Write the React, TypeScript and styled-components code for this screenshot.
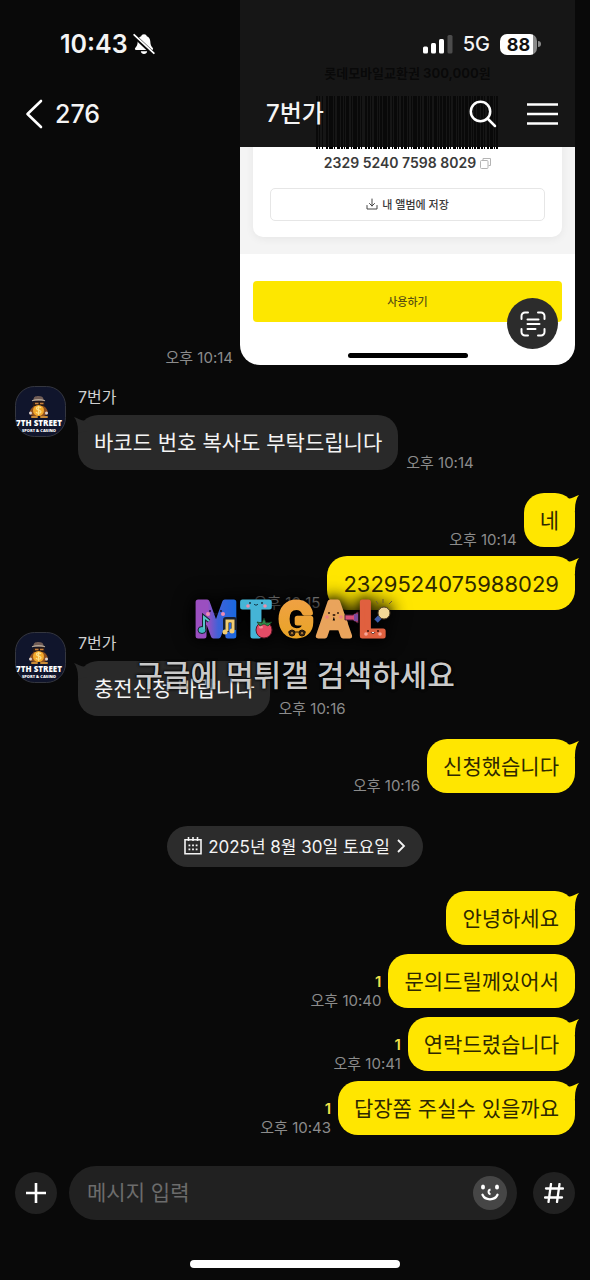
import React from 'react';
import styled, { createGlobalStyle } from 'styled-components';

const GlobalStyle = createGlobalStyle`
  * { box-sizing: border-box; }
  body {
    margin: 0;
    background: #090909;
    color: #f4f4f4;
    font-family: Inter, 'Noto Sans CJK KR', sans-serif;
  }
  button, input { font: inherit; color: inherit; }
  button { border: 0; padding: 0; background: none; cursor: pointer; }
  svg { display: block; flex: none; }
`;

const Screen = styled.div`
  position: relative;
  min-height: 100vh;
  display: flex;
  flex-direction: column;
  overflow: hidden;
`;

/* ---------- header ---------- */

const Header = styled.header`
  position: absolute;
  top: 0;
  left: 0;
  right: 0;
  z-index: 2;
  padding-bottom: 7px;
  background: rgba(9, 9, 9, 0.95);
`;

const StatusBar = styled.div`
  height: 88px;
  padding: 0 49px 0 60px;
  display: flex;
  align-items: center;
  justify-content: space-between;
`;

const StatusGroup = styled.div<{ $gap: number }>`
  display: flex;
  align-items: center;
  gap: ${(p) => p.$gap}px;
`;

const Clock = styled.time`
  font-size: 25px;
  font-weight: 600;
  line-height: 28px;
`;

const Network = styled.span`
  font-size: 20px;
  font-weight: 500;
  line-height: 24px;
`;

const Battery = styled.div`
  display: flex;
  align-items: center;
  gap: 1px;
`;

const BatteryBody = styled.span`
  width: 37px;
  height: 21px;
  border-radius: 7px;
  background: linear-gradient(to right, #fff 88%, #8a8a8a 88%);
  color: #111;
  font-size: 18px;
  font-weight: 700;
  line-height: 21px;
  text-align: center;
`;

const BatteryTip = styled.span`
  width: 3px;
  height: 6px;
  border-radius: 0 3px 3px 0;
  background: #8a8a8a;
`;

const NavBar = styled.nav`
  height: 52px;
  padding: 0 32px 0 25px;
  display: grid;
  grid-template-columns: 1fr auto 1fr;
  align-items: center;
`;

const BackButton = styled.button`
  display: flex;
  align-items: center;
  gap: 12px;
  font-size: 25px;
  font-weight: 500;
  line-height: 30px;
`;

const Title = styled.h1`
  margin: 0 0 0 7px;
  font-size: 24px;
  font-weight: 500;
  line-height: 30px;
`;

const NavActions = styled.div`
  display: flex;
  align-items: center;
  justify-content: flex-end;
  gap: 30px;
`;

/* ---------- coupon photo ---------- */

const Photo = styled.article`
  position: relative;
  width: 335px;
  padding-bottom: 7px;
  border-radius: 0 0 20px 20px;
  background: #fff;
  color: #3a3a3a;
  overflow: hidden;
`;

const CouponArea = styled.div`
  padding: 0 13px 17px;
  background: #f4f4f4;
`;

const CouponCard = styled.div`
  padding: 63px 17px 16px;
  border-radius: 0 0 10px 10px;
  background: #fff;
  box-shadow: 0 2px 8px rgba(0, 0, 0, 0.06);
  display: flex;
  flex-direction: column;
  align-items: center;
`;

const CouponTitle = styled.h2`
  margin: 0 0 13px;
  color: #000;
  font-size: 13px;
  font-weight: 700;
  line-height: 20px;
`;

const CouponNumber = styled.div`
  margin: 4px 0 15px;
  display: flex;
  align-items: center;
  gap: 4px;
  font-size: 14px;
  font-weight: 600;
  line-height: 20px;
`;

const SaveButton = styled.button`
  width: 100%;
  height: 33px;
  padding-bottom: 2px;
  border: 1px solid #e6e6e6;
  border-radius: 5px;
  display: flex;
  align-items: center;
  justify-content: center;
  gap: 4px;
  font-size: 11px;
  font-weight: 500;
`;

const UseButton = styled.button`
  display: block;
  width: calc(100% - 26px);
  height: 41px;
  margin: 27px 13px 31px;
  padding-bottom: 2px;
  border-radius: 4px;
  background: #fde700;
  color: #5a5010;
  font-size: 11px;
  font-weight: 500;
`;

const PhotoHandle = styled.div`
  width: 120px;
  height: 5px;
  margin: 0 auto;
  border-radius: 3px;
  background: #000;
`;

const ScanButton = styled.button`
  position: absolute;
  right: 17px;
  bottom: 16px;
  width: 51px;
  height: 51px;
  border-radius: 50%;
  background: #2c2c2c;
  display: grid;
  place-items: center;
`;

/* ---------- messages ---------- */

const Chat = styled.main`
  flex: 1;
  padding: 0 15px 31px;
  display: flex;
  flex-direction: column;
`;

const Row = styled.div<{ $mine?: boolean; $gap?: number }>`
  display: flex;
  justify-content: ${(p) => (p.$mine ? 'flex-end' : 'flex-start')};
  align-items: ${(p) => (p.$mine ? 'flex-end' : 'flex-start')};
  gap: ${(p) => (p.$mine ? 7 : 12)}px;
  margin-top: ${(p) => p.$gap ?? 0}px;
`;

const Sender = styled.div`
  margin-bottom: 7px;
  color: #cfcfcf;
  font-size: 16px;
  line-height: 22px;
`;

const BubbleLine = styled.div`
  display: flex;
  align-items: flex-end;
  gap: 8px;
`;

const Bubble = styled.div<{ $mine?: boolean; $digits?: boolean }>`
  position: relative;
  padding: ${(p) => (p.$mine ? '13px 16px 11px' : '13px 16px 12px')};
  border-radius: 20px;
  background: ${(p) => (p.$mine ? '#ffe600' : '#292929')};
  color: ${(p) => (p.$mine ? '#2e2800' : '#f4f4f4')};
  font-size: ${(p) => (p.$digits ? 22 : 21)}px;
  line-height: 30px;
`;

const Tail = styled.svg<{ $mine?: boolean }>`
  position: absolute;
  top: 2px;
  ${(p) => (p.$mine ? 'right: -4px;' : 'left: -4px;')}
  fill: ${(p) => (p.$mine ? '#ffe600' : '#292929')};
`;

const Meta = styled.div`
  display: flex;
  flex-direction: column;
  align-items: flex-end;
`;

const Unread = styled.span`
  color: #f0e04a;
  font-size: 15px;
  font-weight: 600;
  line-height: 24px;
`;

const Time = styled.time`
  color: #8c8c8c;
  font-size: 15px;
  line-height: 14px;
  white-space: nowrap;
`;

const DateChip = styled.button`
  align-self: center;
  height: 41px;
  margin: 33px 0 24px;
  padding: 0 17px 2px;
  border-radius: 21px;
  background: #2c2c2c;
  display: flex;
  align-items: center;
  gap: 6px;
  font-size: 17px;
`;

/* ---------- composer ---------- */

const Footer = styled.footer`
  padding: 0 15px 12px;
`;

const Composer = styled.form`
  display: flex;
  align-items: center;
`;

const RoundButton = styled.button<{ $size: number; $tone: string }>`
  flex: none;
  width: ${(p) => p.$size}px;
  height: ${(p) => p.$size}px;
  border-radius: 50%;
  background: ${(p) => p.$tone};
  display: grid;
  place-items: center;
`;

const Field = styled.div`
  flex: 1;
  min-width: 0;
  height: 54px;
  margin: 0 16px 0 12px;
  padding: 0 10px 0 18px;
  border-radius: 27px;
  background: #212121;
  display: flex;
  align-items: center;
`;

const TextInput = styled.input`
  flex: 1;
  min-width: 0;
  padding: 0;
  border: 0;
  outline: 0;
  background: none;
  font-size: 21px;
  line-height: 30px;
  &::placeholder { color: #6c6c6c; opacity: 1; }
`;

const HomeIndicator = styled.div`
  width: 210px;
  height: 8px;
  margin: 40px auto 0;
  border-radius: 4px;
  background: #fff;
`;

/* ---------- promotional overlay ---------- */

const Promo = styled.aside`
  position: absolute;
  top: 594px;
  left: 0;
  right: 0;
  display: flex;
  flex-direction: column;
  align-items: center;
  gap: 7px;
  pointer-events: none;
`;

const PromoLogo = styled.svg`
  overflow: visible;
  filter: drop-shadow(0 0 9px #000) drop-shadow(0 0 5px rgba(0, 0, 0, 0.7));
`;

const PromoText = styled.p`
  margin: 0;
  color: rgba(222, 222, 222, 0.92);
  font-size: 30px;
  font-weight: 500;
  line-height: 48px;
  text-shadow: 0 0 3px #000, 0 0 3px #000;
  white-space: nowrap;
`;

/* ---------- drawings ---------- */

const MutedBell = () => (
  <svg width="22" height="22" viewBox="0 0 22 22" fill="#fff" aria-hidden="true">
    <path d="M11 1.2c1.6 0 2.5.9 2.8 2 2.2.8 3.4 2.7 3.5 5.3.1 3.2.8 4.7 2.3 6.2.9.9.6 2.300-.8 2.300H3.200c-1.400 0-1.700-1.400-.8-2.300 1.500-1.500 2.200-3 2.300-6.200.1-2.600 1.300-4.500 3.500-5.300.3-1.100 1.200-2 2.800-2z" />
    <path d="M7.800 18.300h6.400c-.3 1.700-1.500 2.700-3.200 2.700s-2.900-1-3.200-2.700z" />
    <path d="M.5 2.200 20.500 21" stroke="#090909" strokeWidth="4" />
    <path d="M1.200 1.800 20.800 20.200" stroke="#fff" strokeWidth="1.800" strokeLinecap="round" />
  </svg>
);

const Signal = () => (
  <svg width="30" height="19" viewBox="0 0 30 19" fill="#fff" aria-hidden="true">
    <rect x="0" y="11.5" width="5" height="7" rx="1.5" />
    <rect x="8" y="8" width="5" height="10.5" rx="1.5" />
    <rect x="16" y="4" width="5" height="14.5" rx="1.5" />
    <rect x="24.5" y="0" width="5" height="18.5" rx="1.5" fill="#4c4c4c" />
  </svg>
);

const BARS = [
  2, 1, 1, 2, 1, 3, 2, 1, 4, 1, 1, 2, 3, 1, 2, 1, 1, 1, 3, 2, 1, 1, 4, 1, 2, 1, 1, 3, 2, 1, 2, 1, 1, 2,
  3, 1, 1, 1, 2, 1, 4, 1, 2, 2, 1, 1, 3, 1, 1, 2, 2, 1, 3, 1, 1, 2, 1, 1, 4, 1, 2, 1, 1, 2, 3, 1, 1, 1,
  2, 2, 3, 1, 1, 1, 2, 1, 3, 1, 2, 1, 1, 2, 3, 1, 1, 1, 2, 1, 2, 1, 3, 1, 2, 1, 1, 1, 2, 1, 3, 1, 2, 1,
  1, 2, 2, 1, 3, 1, 1, 1, 2, 1, 1,
];

const Barcode = () => {
  const bars: React.ReactNode[] = [];
  let x = 0;
  BARS.forEach((w, i) => {
    if (i % 2 === 0 && x + w <= 183) bars.push(<rect key={i} x={x} y="0" width={w} height="53" />);
    x += w;
  });
  return (
    <svg width="183" height="53" viewBox="0 0 183 53" role="img" aria-label="바코드">
      {bars}
    </svg>
  );
};

const Avatar = () => (
  <svg width="51" height="51" viewBox="0 0 51 51" role="img" aria-label="7번가">
    <rect x=".5" y=".5" width="50" height="50" rx="19" fill="#10152c" stroke="#34363f" />
    <path d="M18 16c-1 3 0 6 2 7h7c3-2 3-5 2-8z" fill="#2a1c18" />
    <path d="M18.5 13.500c.3-3 2-3.500 5-3.500s4.800.8 5 3.500l1 1.500H17.500z" fill="#6f5b55" />
    <path d="M17 14.800c4-1.500 9-1.500 13 0" stroke="#b5a898" strokeWidth="1.200" fill="none" />
    <path d="M20 17.500h3.500M25 17.500h3.500" stroke="#c9803c" strokeWidth="1.500" />
    <path d="M19 20c-4 3-5 6-4 9l4 1h10l4-2c0-4-2-7-5-8z" fill="#8f5120" />
    <circle cx="23.5" cy="24.5" r="5.5" fill="#f3a92c" />
    <path d="M26 22c-1-1.500-5-1.500-4.500.5.5 2 4.500 1.200 4.500 3.200 0 2-4 2-5 .3M23.600 20v9" stroke="#fbe08a" strokeWidth="1.200" fill="none" />
    <circle cx="15.500" cy="27" r="1.500" fill="#d8d0d0" />
    <circle cx="31.500" cy="27" r="1.500" fill="#d8d0d0" />
    <path d="M17 31h5M26 31h6" stroke="#c98a35" strokeWidth="2" strokeLinecap="round" />
    <text x="24" y="40" textAnchor="middle" fill="#fff" fontFamily="Open Sans, sans-serif" fontSize="8" fontWeight="800">7TH STREET</text>
    <text x="24" y="46" textAnchor="middle" fill="#fff" fontFamily="Open Sans, sans-serif" fontSize="4" fontWeight="800">SPORT &amp; CASINO</text>
  </svg>
);

const BubbleTail = ({ mine }: { mine?: boolean }) => (
  <Tail $mine={mine} width="18" height="18" viewBox="0 0 18 18" aria-hidden="true">
    {mine ? (
      <path d="M4 7 7.500 3.700C11 3.500 14.500 1 18 0c-2.500 3-4 8-4 14v2L4 14z" />
    ) : (
      <path d="M14 7 10.500 3.700C7 3.500 3.500 1 0 0c2.500 3 4 8 4 14v2l10-2z" />
    )}
  </Tail>
);

const Logo = () => (
  <PromoLogo width="196" height="50" viewBox="3 0 196 50" role="img" aria-label="MT.GAL">
    <defs>
      <linearGradient id="m" x1="0" x2="1" y1="0" y2="0">
        <stop offset=".3" stopColor="#9b4fc0" />
        <stop offset=".55" stopColor="#3f62d8" />
        <stop offset="1" stopColor="#1769e0" />
      </linearGradient>
      <linearGradient id="g" x1="0" x2="0" y1="0" y2="1">
        <stop offset="0" stopColor="#f0a04a" />
        <stop offset="1" stopColor="#e8a51f" />
      </linearGradient>
    </defs>
    <g fontFamily="Inter, sans-serif" fontSize="46" fontWeight="600" textAnchor="middle" strokeWidth="5" strokeLinejoin="round">
      <text x="22" y="42" fill="url(#m)" stroke="url(#m)">M</text>
      <text x="62" y="42" fill="#45b4d6" stroke="#45b4d6">T</text>
      <text x="102" y="42" fill="url(#g)" stroke="url(#g)">G</text>
      <text x="140" y="42" fill="#e9a45c" stroke="#e9a45c">A</text>
      <text x="178" y="42" fill="#e0603f" stroke="#e0603f">L</text>
    </g>
    {/* M: face and notes */}
    <g fill="#211733">
      <circle cx="16" cy="17" r="1" />
      <circle cx="27" cy="17" r="1" />
    </g>
    <circle cx="14" cy="20" r="2" fill="#f08bb4" />
    <circle cx="29" cy="20" r="2" fill="#f08bb4" />
    <path d="M20 19c1 1.500 2.500 1.500 3.500 0" stroke="#211733" fill="none" />
    <path d="M10 36V23l5 4" stroke="#182030" strokeWidth="4" fill="none" />
    <ellipse cx="8" cy="36" rx="4" ry="3.500" fill="#44b9c4" stroke="#182030" />
    <path d="M10 35V23l5 4" stroke="#56c5c8" strokeWidth="2" fill="none" />
    <path d="M32 38V26h8v10" stroke="#182030" strokeWidth="6" fill="none" strokeLinejoin="round" />
    <path d="M33 37V27h6v9" stroke="#f2cd72" strokeWidth="3" fill="none" />
    <circle cx="31" cy="38" r="2.500" fill="#f2cd72" />
    <circle cx="38" cy="37" r="2.500" fill="#f2cd72" />
    {/* T: face and tomato */}
    <g fill="#153544">
      <circle cx="56" cy="9" r="1" />
      <circle cx="68" cy="9" r="1" />
    </g>
    <path d="M60 10c1 1.500 3 1.500 4 0" stroke="#153544" fill="none" />
    <circle cx="54" cy="12" r="1.800" fill="#ee8eab" />
    <circle cx="71" cy="12" r="1.800" fill="#ee8eab" />
    <circle cx="70" cy="36" r="8" fill="#e54b66" stroke="#5a1726" />
    <ellipse cx="67" cy="33" rx="2" ry="1.500" fill="#f58b99" />
    <path d="M63 28l5 1 2-5 2 5 6-1-4 4-4-2-4 2z" fill="#2f8b48" stroke="#123b20" strokeWidth=".7" />
    {/* G: glasses */}
    <g fill="#3d2a16" stroke="#1b120b">
      <circle cx="98" cy="39" r="3" />
      <circle cx="108" cy="39" r="3" />
      <path d="M94 38h18" />
    </g>
    <circle cx="98" cy="39" r="1" fill="#c98a35" />
    <circle cx="108" cy="39" r="1" fill="#c98a35" />
    {/* A: face and megaphone */}
    <g fill="#3a2010">
      <circle cx="135" cy="19" r="1" />
      <circle cx="144" cy="19" r="1" />
      <ellipse cx="140" cy="21" rx="1.500" ry="1" />
    </g>
    <circle cx="133" cy="23" r="1.800" fill="#ef8080" />
    <circle cx="147" cy="23" r="1.800" fill="#ef8080" />
    <path d="M151 21h8l5-3v11l-5-3h-8z" fill="#d94d78" stroke="#4a1d3a" />
    <rect x="160" y="20" width="4" height="7" fill="#7c4a9c" />
    <path d="M152 28v5" stroke="#e9a45c" strokeWidth="3" strokeLinecap="round" />
    {/* L: face and bulb */}
    <g fill="#3a1510">
      <circle cx="174" cy="37" r="1" />
      <circle cx="184" cy="37" r="1" />
    </g>
    <path d="M177 38c1 2 3 2 4 0" stroke="#3a1510" fill="#fff" />
    <circle cx="172" cy="40" r="1.800" fill="#f7a79a" />
    <circle cx="186" cy="40" r="1.800" fill="#f7a79a" />
    <path d="M186 23l-4 4" stroke="#3d5aa8" strokeWidth="5" />
    <circle cx="190" cy="19" r="6" fill="#f2d797" stroke="#4b3b25" />
    <path d="M184 10l-2-3M189 9V5M195 10l3-3" stroke="#6b5a33" />
  </PromoLogo>
);

type Message = {
  text: string;
  time?: string;
  unread?: boolean;
  digits?: boolean;
  tail?: boolean;
  gap: number;
};

const Outgoing = ({ text, time, unread, digits, tail = true, gap }: Message) => (
  <Row $mine $gap={gap}>
    <Meta>
      {unread && <Unread>1</Unread>}
      {time && <Time>오후 {time}</Time>}
    </Meta>
    <Bubble $mine $digits={digits}>
      {text}
      {tail && <BubbleTail mine />}
    </Bubble>
  </Row>
);

const Incoming = ({ text, time, gap }: Message) => (
  <Row $gap={gap}>
    <Avatar />
    <div>
      <Sender>7번가</Sender>
      <BubbleLine>
        <Bubble>
          {text}
          <BubbleTail />
        </Bubble>
        <Time>오후 {time}</Time>
      </BubbleLine>
    </div>
  </Row>
);

export default function App() {
  return (
    <Screen>
      <GlobalStyle />
      <Header>
        <StatusBar>
          <StatusGroup $gap={5}>
            <Clock>10:43</Clock>
            <MutedBell />
          </StatusGroup>
          <StatusGroup $gap={10}>
            <Signal />
            <Network>5G</Network>
            <Battery>
              <BatteryBody>88</BatteryBody>
              <BatteryTip />
            </Battery>
          </StatusGroup>
        </StatusBar>
        <NavBar>
          <BackButton aria-label="뒤로, 읽지 않음 276">
            <svg width="18" height="30" viewBox="0 0 18 30" fill="none" stroke="#fff" strokeWidth="2.600" strokeLinecap="round" strokeLinejoin="round">
              <path d="M16 2 2.500 15 16 28" />
            </svg>
            276
          </BackButton>
          <Title>7번가</Title>
          <NavActions>
            <button aria-label="검색">
              <svg width="28" height="28" viewBox="0 0 28 28" fill="none" stroke="#fff" strokeWidth="2.500" strokeLinecap="round">
                <circle cx="11.500" cy="11.500" r="9.700" />
                <path d="m18.500 18.500 7.500 7.500" />
              </svg>
            </button>
            <button aria-label="메뉴">
              <svg width="31" height="24" viewBox="0 0 31 24" stroke="#fff" strokeWidth="2.500">
                <path d="M0 2.500h31M0 12h31M0 21.500h31" />
              </svg>
            </button>
          </NavActions>
        </NavBar>
      </Header>

      <Chat>
        <Row $mine>
          <Time>오후 10:14</Time>
          <Photo>
            <CouponArea>
              <CouponCard>
                <CouponTitle>롯데모바일교환권 300,000원</CouponTitle>
                <Barcode />
                <CouponNumber>
                  2329 5240 7598 8029
                  <svg width="11" height="11" viewBox="0 0 11 11" fill="none" stroke="#b4b4b4">
                    <path d="M3 2.500V.5h7.500v7H8.500" />
                    <rect x=".5" y="2.500" width="7.500" height="8" rx="1" />
                  </svg>
                </CouponNumber>
                <SaveButton>
                  <svg width="12" height="12" viewBox="0 0 12 12" fill="none" stroke="#444" strokeLinecap="round" strokeLinejoin="round">
                    <path d="M6 1v7M3.500 5.500 6 8l2.500-2.500M1 7.500V11h10V7.500" />
                  </svg>
                  내 앨범에 저장
                </SaveButton>
              </CouponCard>
            </CouponArea>
            <UseButton>사용하기</UseButton>
            <PhotoHandle />
            <ScanButton aria-label="텍스트 인식">
              <svg width="26" height="26" viewBox="0 0 26 26" fill="none" stroke="#fff" strokeWidth="2" strokeLinecap="round">
                <path d="M1.500 8V5A3.500 3.500 0 0 1 5 1.500h3M18 1.500h3A3.500 3.500 0 0 1 24.500 5v3M24.500 18v3a3.500 3.500 0 0 1-3.500 3.500h-3M8 24.500H5A3.500 3.500 0 0 1 1.500 21v-3" />
                <path d="M7.500 8.500h11M7.500 13h12M7.500 18h8" />
              </svg>
            </ScanButton>
          </Photo>
        </Row>

        <Incoming text="바코드 번호 복사도 부탁드립니다" time="10:14" gap={21} />
        <Outgoing text="네" time="10:14" gap={23} />
        <Outgoing text="2329524075988029" time="10:15" digits gap={9} />
        <Incoming text="충전신청 바랍니다" time="10:16" gap={22} />
        <Outgoing text="신청했습니다" time="10:16" gap={23} />

        <DateChip>
          <svg width="18" height="18" viewBox="0 0 18 18" fill="none" stroke="#f4f4f4" strokeWidth="1.600">
            <path d="M1 2.800h16v14H1zM4.500 0v4M9 0v4M13.500 0v4" />
            <path d="M4.500 8.300h9M4.500 12.300h9" strokeWidth="1.800" strokeDasharray="1.800 1.800" />
          </svg>
          2025년 8월 30일 토요일
          <svg width="10" height="14" viewBox="0 0 10 14" fill="none" stroke="#f4f4f4" strokeWidth="1.800">
            <path d="m2 1 6 6-6 6" />
          </svg>
        </DateChip>

        <Outgoing text="안녕하세요" gap={0} />
        <Outgoing text="문의드릴께있어서" time="10:40" unread tail={false} gap={9} />
        <Outgoing text="연락드렸습니다" time="10:41" unread gap={9} />
        <Outgoing text="답장쫌 주실수 있을까요" time="10:43" unread gap={10} />
      </Chat>

      <Footer>
        <Composer onSubmit={(e) => e.preventDefault()}>
          <RoundButton type="button" $size={42} $tone="#212121" aria-label="추가">
            <svg width="20" height="20" viewBox="0 0 20 20" stroke="#fff" strokeWidth="2.600">
              <path d="M10 0v20M0 10h20" />
            </svg>
          </RoundButton>
          <Field>
            <TextInput type="text" placeholder="메시지 입력" aria-label="메시지 입력" />
            <RoundButton type="button" $size={34} $tone="#464646" aria-label="이모티콘">
              <svg width="20" height="18" viewBox="0 0 20 18" fill="#fff">
                <ellipse cx="3" cy="3" rx="2" ry="2.600" />
                <ellipse cx="17" cy="3" rx="2" ry="2.600" />
                <path d="M10.500 5.500c-2.600.5-2.600 4.200 0 4.700" fill="none" stroke="#fff" strokeWidth="2" />
                <path d="M2.500 10.800c2.700 6 12.300 6 15 0" fill="none" stroke="#fff" strokeWidth="2.300" strokeLinecap="round" />
              </svg>
            </RoundButton>
          </Field>
          <RoundButton type="button" $size={42} $tone="#212121" aria-label="샵 검색">
            <svg width="20" height="20" viewBox="0 0 20 20" fill="none" stroke="#fff" strokeWidth="2.300" strokeLinecap="round">
              <path d="M7 1 4.500 19M15.500 1 13 19M2 5.500h17M1 14.500h17" />
            </svg>
          </RoundButton>
        </Composer>
        <HomeIndicator />
      </Footer>

      <Promo>
        <Logo />
        <PromoText>구글에 먹튀갤 검색하세요</PromoText>
      </Promo>
    </Screen>
  );
}
